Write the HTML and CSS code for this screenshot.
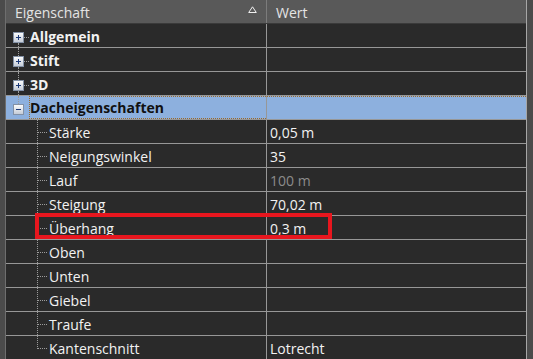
FILE: index.html
```html
<!DOCTYPE html>
<html lang="de">
<head>
    <meta charset="UTF-8">
    <title>Eigenschaften</title>
    <link rel="stylesheet" href="styles.css">
</head>
<body>
    <div class="grid">
        <div class="row head">
            <div class="cell name">
                <span class="label">Eigenschaft</span>
                <svg class="sort" width="9" height="7" viewBox="0 0 9 7"><path d="M4.5 0.8 L8.3 6.5 H0.7 Z" fill="none" stroke="#f0f0f0" stroke-width="1"/></svg>
            </div>
            <div class="cell value"><span class="label">Wert</span></div>
        </div>

        <div class="row group">
            <div class="cell name">
                <span class="node"><span class="stem top none"></span><span class="box"><svg width="9" height="9" viewBox="0 0 9 9"><rect x="2" y="4" width="5" height="1" fill="#1d3a78"/><rect x="4" y="2" width="1" height="5" fill="#1d3a78"/></svg></span><span class="stem bottom"></span></span>
                <span class="dash"></span>
                <span class="label">Allgemein</span>
            </div>
            <div class="cell value"></div>
        </div>

        <div class="row group">
            <div class="cell name">
                <span class="node"><span class="stem top"></span><span class="box"><svg width="9" height="9" viewBox="0 0 9 9"><rect x="2" y="4" width="5" height="1" fill="#1d3a78"/><rect x="4" y="2" width="1" height="5" fill="#1d3a78"/></svg></span><span class="stem bottom"></span></span>
                <span class="dash"></span>
                <span class="label">Stift</span>
            </div>
            <div class="cell value"></div>
        </div>

        <div class="row group">
            <div class="cell name">
                <span class="node"><span class="stem top"></span><span class="box"><svg width="9" height="9" viewBox="0 0 9 9"><rect x="2" y="4" width="5" height="1" fill="#1d3a78"/><rect x="4" y="2" width="1" height="5" fill="#1d3a78"/></svg></span><span class="stem bottom"></span></span>
                <span class="dash"></span>
                <span class="label">3D</span>
            </div>
            <div class="cell value"></div>
        </div>

        <div class="row group selected">
            <div class="cell name">
                <span class="node"><span class="stem top"></span><span class="box"><svg width="9" height="9" viewBox="0 0 9 9"><rect x="2" y="4" width="5" height="1" fill="#1d3a78"/></svg></span><span class="stem bottom none"></span></span>
                <span class="focus">Dacheigenschaften</span>
            </div>
            <div class="cell value"></div>
        </div>

        <div class="row child">
            <div class="cell name"><span class="twig"></span><span class="label">Stärke</span></div>
            <div class="cell value"><span class="label">0,05 m</span></div>
        </div>
        <div class="row child">
            <div class="cell name"><span class="twig"></span><span class="label">Neigungswinkel</span></div>
            <div class="cell value"><span class="label">35</span></div>
        </div>
        <div class="row child">
            <div class="cell name"><span class="twig"></span><span class="label">Lauf</span></div>
            <div class="cell value"><span class="label muted">100 m</span></div>
        </div>
        <div class="row child">
            <div class="cell name"><span class="twig"></span><span class="label">Steigung</span></div>
            <div class="cell value"><span class="label">70,02 m</span></div>
        </div>
        <div class="row child">
            <div class="cell name"><span class="twig"></span><span class="label">Überhang</span></div>
            <div class="cell value"><span class="label">0,3 m</span></div>
        </div>
        <div class="row child">
            <div class="cell name"><span class="twig"></span><span class="label">Oben</span></div>
            <div class="cell value"></div>
        </div>
        <div class="row child">
            <div class="cell name"><span class="twig"></span><span class="label">Unten</span></div>
            <div class="cell value"></div>
        </div>
        <div class="row child">
            <div class="cell name"><span class="twig"></span><span class="label">Giebel</span></div>
            <div class="cell value"></div>
        </div>
        <div class="row child">
            <div class="cell name"><span class="twig"></span><span class="label">Traufe</span></div>
            <div class="cell value"></div>
        </div>
        <div class="row child">
            <div class="cell name"><span class="twig last"></span><span class="label">Kantenschnitt</span></div>
            <div class="cell value"><span class="label">Lotrecht</span></div>
        </div>

        <div class="marker"></div>
    </div>
</body>
</html>
```

FILE: styles.css
```css
body {
    margin: 0;
    background-color: #4b4b4b;
    font-family: "Open Sans", "Noto Sans", sans-serif;
    font-size: 14px;
    color: #f2f2f2;
    overflow: hidden;
}

.grid {
    position: relative;
    width: 520px;
    margin-left: 5px;
    border-left: 1px solid #6e6e6e;
    border-right: 1px solid #a6a6a6;
    background-color: #2a2a2a;
}

.row {
    display: flex;
    height: 23px;
    border-bottom: 1px solid #979797;
}

.cell {
    display: flex;
    align-items: flex-start;
    height: 23px;
}

.cell.name {
    width: 260px;
    border-right: 1px solid #979797;
}

.cell.value {
    flex: 1;
    padding-left: 1px;
}

.label {
    padding-top: 2px;
    line-height: 21px;
    white-space: nowrap;
}

.muted {
    color: #8c8c8c;
}

/* header */
.head {
    background-color: #595959;
    border-bottom: 1px solid #3a3a3a;
}

.head .cell.name {
    padding-left: 9px;
    width: 251px;
    border-right: 1px solid #7c7c7c;
}

.head .cell.value {
    padding-left: 9px;
}

.head .label {
    color: #e4e4e4;
}

.sort {
    margin-left: auto;
    margin-right: 9px;
    margin-top: 6px;
}

/* groups */
.group .cell.name {
    padding-left: 7px;
    width: 253px;
}

.group .label,
.focus {
    font-weight: bold;
}

.node {
    display: flex;
    flex-direction: column;
    width: 11px;
    height: 23px;
}

.stem {
    display: block;
    margin-left: 5px;
    border-left: 1px dotted #9c9c9c;
}

.stem.top {
    height: 8px;
}

.stem.bottom {
    height: 4px;
}

.stem.none {
    border-left-color: transparent;
}

.box {
    display: block;
    width: 9px;
    height: 9px;
    border: 1px solid #8391a6;
    background: linear-gradient(#fafbfc, #c5ccd7);
}

.box svg {
    display: block;
}

.dash {
    width: 5px;
    margin-top: 13px;
    border-top: 1px dotted #9c9c9c;
}

.group .label {
    margin-left: 1px;
}

.selected {
    background-color: #8db0de;
}

.selected .cell.value {
    border-top: 1px dotted #9a6a2c;
    height: 22px;
}

.focus {
    flex: 1;
    height: 21px;
    margin-left: 5px;
    border: 1px dotted #9a6a2c;
    border-right: none;
    line-height: 21px;
    padding-top: 0;
    color: #111;
}

/* children */
.child .cell.name {
    padding-left: 31px;
    width: 229px;
}

.twig {
    width: 9px;
    height: 23px;
    border-left: 1px dotted #9c9c9c;
}

.twig::before {
    content: "";
    display: block;
    height: 12px;
    border-bottom: 1px dotted #9c9c9c;
}

.twig.last {
    border-left-color: transparent;
}

.twig.last::before {
    margin-left: -1px;
    border-left: 1px dotted #9c9c9c;
}

.child .label {
    margin-left: 2px;
}

/* red highlight drawn over the Überhang row */
.marker {
    position: absolute;
    left: 29px;
    top: 213px;
    width: 289px;
    height: 18px;
    border: 4px solid #e8161e;
}
```
